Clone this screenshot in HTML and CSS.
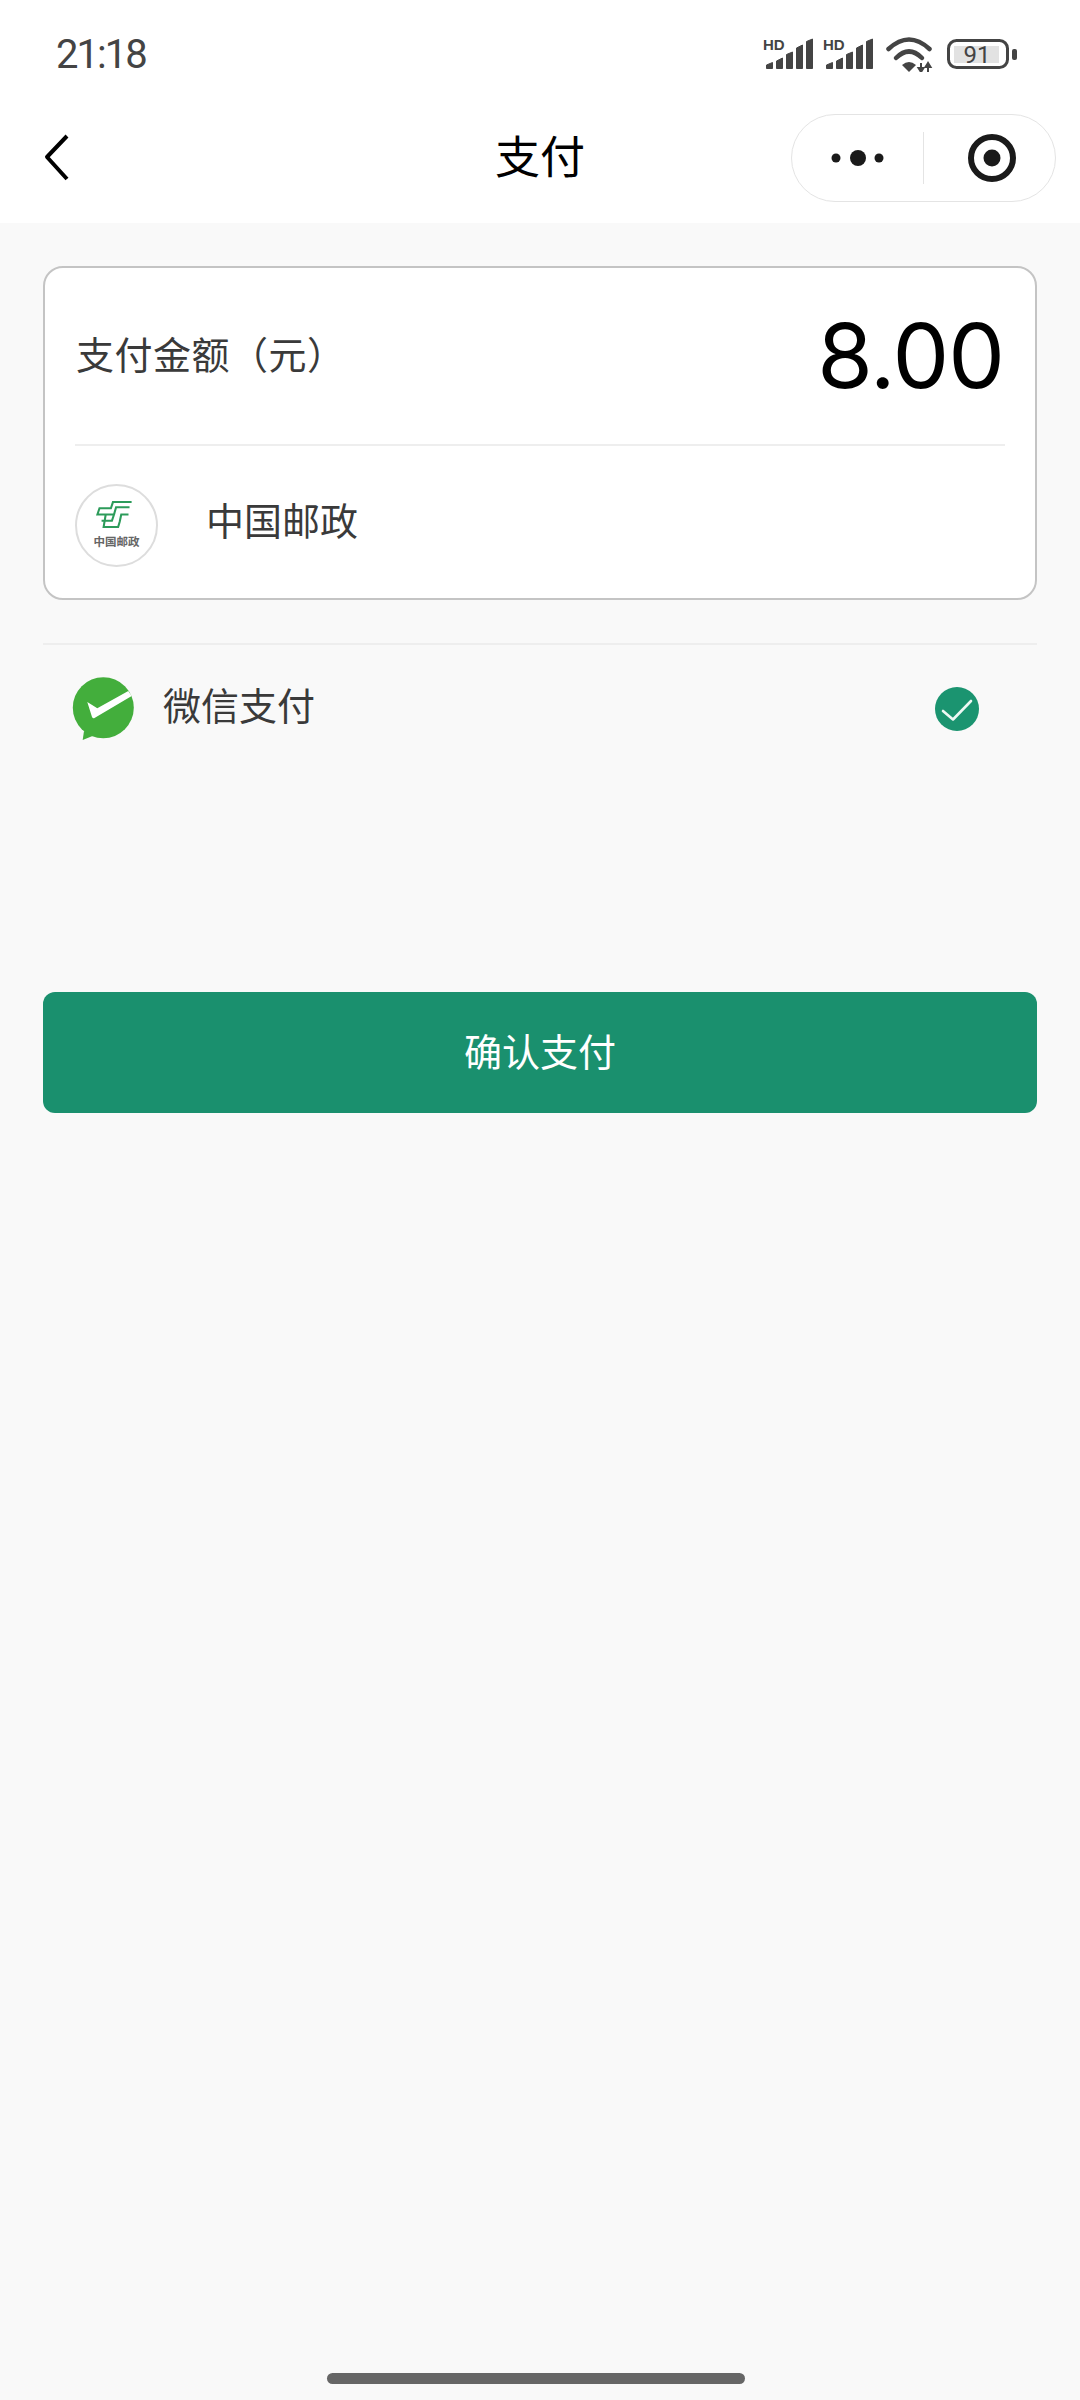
FILE: index.html
```html
<!DOCTYPE html>
<html lang="zh-CN">
<head>
  <meta charset="UTF-8">
  <meta name="viewport" content="width=device-width, initial-scale=1.0">
  <title>支付</title>
  <link rel="stylesheet" href="styles.css">
</head>
<body>
  <div class="page">
    <div class="status-bar">
      <span class="time">21:18</span>
      <div class="status-icons">
        <svg class="signal" width="52" height="34" viewBox="0 0 52 34">
          <text x="0" y="13" class="hd">HD</text>
          <path d="M3.5 31.5 V28 L9.5 25.5 V31.5 Z"/>
          <path d="M13.5 31.5 V24 L19.5 21 V31.5 Z"/>
          <path d="M23.5 31.5 V17.5 L29.5 15 V31.5 Z"/>
          <path d="M33.5 31.5 V11 L39.5 8 V31.5 Z"/>
          <path d="M43.5 31.5 V4.5 L49.5 2 V31.5 Z"/>
        </svg>
        <svg class="signal" width="52" height="34" viewBox="0 0 52 34">
          <text x="0" y="13" class="hd">HD</text>
          <path d="M3.5 31.5 V28 L9.5 25.5 V31.5 Z"/>
          <path d="M13.5 31.5 V24 L19.5 21 V31.5 Z"/>
          <path d="M23.5 31.5 V17.5 L29.5 15 V31.5 Z"/>
          <path d="M33.5 31.5 V11 L39.5 8 V31.5 Z"/>
          <path d="M43.5 31.5 V4.5 L49.5 2 V31.5 Z"/>
        </svg>
        <svg class="wifi" width="50" height="36" viewBox="0 0 50 36">
          <path d="M4.5 13 Q25 -6 45.5 13" class="arc"/>
          <path d="M12 22 Q25 9 38 22" class="arc"/>
          <path d="M18 29 Q25 23 32 29 L25 36 Z" fill="#444"/>
          <path d="M37 27 V36 M37 36 L34.5 32 H39.5 Z M44 36 V27 M44 27 L41.5 31 H46.5 Z" class="arrows"/>
        </svg>
        <svg class="battery" width="70" height="32" viewBox="0 0 70 32">
          <rect x="1.5" y="2.5" width="59" height="27" rx="8" class="battery-body"/>
          <rect x="7" y="8" width="45" height="17" fill="#e2e2e2"/>
          <text x="30" y="25" class="battery-text">91</text>
          <rect x="65" y="11" width="5" height="11" rx="2" fill="#444"/>
        </svg>
      </div>
    </div>

    <div class="nav-bar">
      <div class="nav-left">
        <svg width="26" height="48" viewBox="0 0 26 48">
          <path d="M23 2 L3 23 L23 45" class="back"/>
        </svg>
      </div>
      <div class="nav-title">支付</div>
      <div class="nav-right">
        <div class="capsule">
          <div class="capsule-part dots">
            <svg width="58" height="20" viewBox="0 0 58 20">
              <circle cx="6" cy="10" r="4.5"/>
              <circle cx="28" cy="10" r="8"/>
              <circle cx="49" cy="10" r="4.5"/>
            </svg>
          </div>
          <div class="capsule-line"></div>
          <div class="capsule-part target">
            <svg width="50" height="50" viewBox="0 0 50 50">
              <circle cx="25" cy="25" r="21" class="target-ring"/>
              <circle cx="25" cy="25" r="8.5"/>
            </svg>
          </div>
        </div>
      </div>
    </div>

    <div class="content">
      <div class="card">
        <div class="amount-row">
          <span class="label">支付金额（元）</span>
          <span class="amount">8.00</span>
        </div>
        <div class="merchant-row">
          <div class="logo">
            <svg class="logo-icon" width="38" height="29" viewBox="0 0 36 28">
              <path d="M35 2 H17 L15 8 H4 L2 14 H18 L16 20 H6 M33 7 H20 L18 14 M32 14 H25 L23.5 21 L22 26 H8 L10 14" class="logo-mark"/>
            </svg>
            <span class="logo-text">中国邮政</span>
          </div>
          <span class="merchant-name">中国邮政</span>
        </div>
      </div>

      <div class="pay-row">
        <svg width="66" height="66" viewBox="0 0 66 66">
          <circle cx="32.3" cy="31.7" r="30.5" fill="#43ae3c"/>
          <path d="M13 55 L11.7 64 L24 59 Z" fill="#43ae3c"/>
          <path d="M57.3 15 L60.7 20 L23.5 42 Q22 42.8 21 41 L16.3 26 L26.3 32.3 Z" fill="#fff"/>
        </svg>
        <span class="pay-name">微信支付</span>
        <svg class="pay-check" width="44" height="44" viewBox="0 0 44 44">
          <circle cx="22" cy="22" r="22" fill="#1b9470"/>
          <path d="M8 24 L18 32.5 L36 14" class="check"/>
        </svg>
      </div>

      <button class="confirm" type="button"><span class="confirm-text">确认支付</span></button>
    </div>

    <div class="home-bar"></div>
  </div>
</body>
</html>
```

FILE: styles.css
```css
html, body {
  margin: 0;
  padding: 0;
}
body {
  font-family: "Noto Sans CJK SC", "Noto Sans", sans-serif;
  background-color: #f9f9f9;
  color: #3a3a3a;
}
.page {
  width: 1080px;
  height: 2400px;
  display: flex;
  flex-direction: column;
  overflow: hidden;
}
.status-bar {
  height: 93px;
  background: #fff;
  display: flex;
  align-items: center;
  justify-content: space-between;
  padding: 15px 63px 0 56px;
  box-sizing: border-box;
}
.time {
  font-family: Roboto, sans-serif;
  font-size: 40px;
  letter-spacing: -2px;
  color: #444;
}
.status-icons {
  display: flex;
  align-items: center;
  gap: 8px;
}
.signal path {
  fill: #444;
  stroke: #444;
  stroke-width: 1;
  stroke-linejoin: round;
}
.hd {
  font-family: "Liberation Sans", sans-serif;
  font-size: 15px;
  font-weight: bold;
  fill: #444;
}
.wifi {
  margin: 0 5px 0 1px;
}
.arc {
  fill: none;
  stroke: #444;
  stroke-width: 4.5;
  stroke-linecap: round;
}
.arrows {
  fill: #444;
  stroke: #444;
  stroke-width: 2;
}
.battery-body {
  fill: none;
  stroke: #444;
  stroke-width: 3;
}
.battery-text {
  font-family: Roboto, sans-serif;
  font-size: 24px;
  text-anchor: middle;
  fill: #444;
}
.nav-bar {
  height: 130px;
  background: #fff;
  display: grid;
  grid-template-columns: 1fr auto 1fr;
  align-items: center;
}
.nav-left {
  padding-left: 44px;
  display: flex;
}
.back {
  fill: none;
  stroke: #000;
  stroke-width: 4;
  stroke-linejoin: round;
}
.nav-title {
  font-size: 45px;
  line-height: 60px;
  padding-bottom: 6px;
  color: #000;
}
.nav-right {
  display: flex;
  justify-content: flex-end;
  padding-right: 24px;
}
.capsule {
  width: 265px;
  height: 88px;
  box-sizing: border-box;
  border: 1px solid #e4e4e4;
  border-radius: 44px;
  display: flex;
  align-items: center;
}
.capsule-part {
  width: 131px;
  display: flex;
  justify-content: center;
  align-items: center;
}
.capsule-part svg {
  fill: #1a1a1a;
}
.dots {
  box-sizing: border-box;
  padding-left: 3px;
}
.target {
  box-sizing: border-box;
  padding-left: 5px;
}
.capsule-line {
  width: 1px;
  height: 52px;
  background: #e4e4e4;
}
.target-ring {
  fill: none;
  stroke: #1a1a1a;
  stroke-width: 6;
}
.content {
  padding: 43px 43px 0;
  display: flex;
  flex-direction: column;
}
.card {
  background: #fff;
  border: 2px solid #c4c4c4;
  border-radius: 20px;
  padding: 0 30px;
}
.amount-row {
  height: 176px;
  display: flex;
  align-items: center;
  justify-content: space-between;
  border-bottom: 2px solid #eee;
}
.label {
  font-size: 38px;
  line-height: 1;
  letter-spacing: 0.5px;
  margin-left: 1px;
  padding-bottom: 6px;
}
.amount {
  font-family: Inter, sans-serif;
  font-size: 90px;
  font-weight: 380;
  letter-spacing: -1px;
  margin-right: 1px;
  color: #000;
  line-height: 1;
}
.merchant-row {
  height: 152px;
  display: flex;
  align-items: center;
  gap: 48px;
}
.logo {
  width: 83px;
  height: 83px;
  box-sizing: border-box;
  margin-top: 6px;
  border: 2px solid #ddd;
  border-radius: 50%;
  display: flex;
  flex-direction: column;
  align-items: center;
  padding-top: 14px;
  gap: 5px;
}
.logo-icon {
  margin-right: 6px;
}
.logo-mark {
  fill: none;
  stroke: #2c9b5a;
  stroke-width: 2;
}
.logo-text {
  font-size: 11.5px;
  font-weight: 700;
  line-height: 14px;
  color: #666;
}
.merchant-name {
  font-size: 38px;
  line-height: 1;
  padding-bottom: 6px;
}
.pay-row {
  margin-top: 43px;
  box-sizing: border-box;
  border-top: 2px solid #eee;
  height: 124px;
  display: flex;
  align-items: center;
  padding: 6px 58px 0 28px;
}
.pay-name {
  font-size: 38px;
  line-height: 1;
  margin-left: 26px;
  padding-bottom: 10px;
  flex: 1;
}
.check {
  fill: none;
  stroke: #eef8f4;
  stroke-width: 2.6;
  stroke-linecap: round;
  stroke-linejoin: round;
}
.confirm {
  margin-top: 225px;
  height: 121px;
  border: 0;
  border-radius: 12px;
  background-color: #1a906e;
  color: #fff;
  font-family: inherit;
  font-size: 38px;
  line-height: 1;
}
.confirm-text {
  display: block;
  padding-bottom: 6px;
}
.home-bar {
  width: 418px;
  height: 11px;
  margin: auto 0 16px 327px;
  border-radius: 6px;
  background: #666;
}
```
